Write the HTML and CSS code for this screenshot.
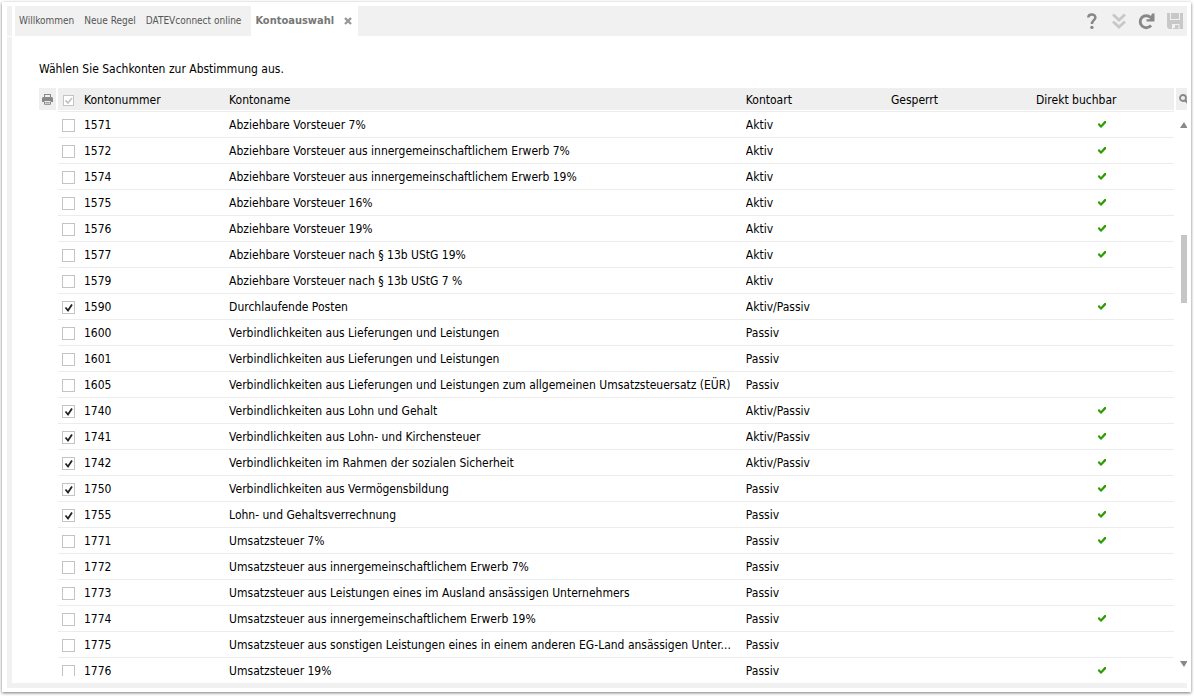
FILE: index.html
```html
<!DOCTYPE html>
<html lang="de">
<head>
<meta charset="utf-8">
<title>Kontoauswahl</title>
<link rel="stylesheet" href="styles.css">
</head>
<body>
<div class="window">
  <header class="topbar">
    <span class="strip"></span>
    <nav class="tabs">
      <a class="tab" href="#willkommen">Willkommen</a>
      <a class="tab" href="#regel">Neue Regel</a>
      <a class="tab" href="#datev">DATEVconnect online</a>
      <div class="tab-active"><a href="#konto">Kontoauswahl</a><button class="icon-btn" type="button" aria-label="Schließen"><svg width="8" height="8" viewBox="0 0 8 8"><path d="M1 1L7 7M7 1L1 7" stroke="#999" stroke-width="2.4"/></svg></button></div>
      <div class="tools">
        <button class="icon-btn" type="button" aria-label="Hilfe"><svg width="13" height="17" viewBox="0 0 13 17"><path d="M1.3 4.4C1.3 0.4 8.4 0.4 8.4 4.4C8.4 7.2 4.9 7.2 4.9 11" fill="none" stroke="#888" stroke-width="2.5"/><circle cx="4.9" cy="14.4" r="1.7" fill="#888"/></svg></button>
        <button class="icon-btn" type="button" aria-label="Alle ausklappen"><svg width="14" height="17" viewBox="0 0 14 17"><path d="M1 1.5L7 7L13 1.5M1 8.5L7 14L13 8.5" fill="none" stroke="#c8c8c8" stroke-width="2.8"/></svg></button>
        <button class="icon-btn" type="button" aria-label="Aktualisieren"><svg width="17" height="17" viewBox="0 0 17 17"><path d="M12.6 4.6A6 6 0 1 0 13 12.3" fill="none" stroke="#888" stroke-width="2.9"/><path d="M16.5 0.5V8.5H8.5V6.2H11.6L14 0.5Z" fill="#888"/></svg></button>
        <button class="icon-btn" type="button" aria-label="Speichern"><svg width="16" height="17" viewBox="0 0 16 17"><path d="M0 0H3V7H13V0H16V16H12.5V11H5V16H2L0 14Z" fill="#c8c8c8"/><path d="M4 0H12V6H4ZM8 12H11.5V16H6V15H8Z" fill="#c8c8c8"/></svg></button>
      </div>
    </nav>
  </header>
  <main class="panel">
    <p class="intro">Wählen Sie Sachkonten zur Abstimmung aus.</p>
    <div class="grid">
      <div class="side"><button class="icon-btn head-cell" type="button" aria-label="Drucken"><svg width="11" height="11" viewBox="0 0 11 11"><path d="M2 0H9V3H2Z" fill="#888"/><path d="M3 1H8V3H3Z" fill="#efefef"/><path d="M1 3H10L11 4V8H9V7H2V8H0V4Z" fill="#888"/><path d="M2.5 7.5V10.3H8.5V7.5" fill="none" stroke="#888"/><path d="M3.5 8.7H7.5" stroke="#888"/></svg></button></div>
      <div class="list">
        <table>
          <colgroup><col class="c-check"><col class="c-num"><col class="c-name"><col class="c-art"><col class="c-lock"><col class="c-book"></colgroup>
          <thead><tr><th><input class="all" type="checkbox" checked aria-label="Alle auswählen"></th><th>Kontonummer</th><th>Kontoname</th><th>Kontoart</th><th>Gesperrt</th><th>Direkt buchbar</th></tr></thead>
          <tbody>
            <tr class="gap"><td colspan="6"></td></tr>
            <tr><td><input type="checkbox" id="k1571"></td><td><label for="k1571">1571</label></td><td>Abziehbare Vorsteuer 7%</td><td>Aktiv</td><td></td><td class="yes"><svg><use href="#tick"/></svg></td></tr>
            <tr><td><input type="checkbox" id="k1572"></td><td><label for="k1572">1572</label></td><td>Abziehbare Vorsteuer aus innergemeinschaftlichem Erwerb 7%</td><td>Aktiv</td><td></td><td class="yes"><svg><use href="#tick"/></svg></td></tr>
            <tr><td><input type="checkbox" id="k1574"></td><td><label for="k1574">1574</label></td><td>Abziehbare Vorsteuer aus innergemeinschaftlichem Erwerb 19%</td><td>Aktiv</td><td></td><td class="yes"><svg><use href="#tick"/></svg></td></tr>
            <tr><td><input type="checkbox" id="k1575"></td><td><label for="k1575">1575</label></td><td>Abziehbare Vorsteuer 16%</td><td>Aktiv</td><td></td><td class="yes"><svg><use href="#tick"/></svg></td></tr>
            <tr><td><input type="checkbox" id="k1576"></td><td><label for="k1576">1576</label></td><td>Abziehbare Vorsteuer 19%</td><td>Aktiv</td><td></td><td class="yes"><svg><use href="#tick"/></svg></td></tr>
            <tr><td><input type="checkbox" id="k1577"></td><td><label for="k1577">1577</label></td><td>Abziehbare Vorsteuer nach § 13b UStG 19%</td><td>Aktiv</td><td></td><td class="yes"><svg><use href="#tick"/></svg></td></tr>
            <tr><td><input type="checkbox" id="k1579"></td><td><label for="k1579">1579</label></td><td>Abziehbare Vorsteuer nach § 13b UStG 7 %</td><td>Aktiv</td><td></td><td></td></tr>
            <tr><td><input type="checkbox" id="k1590" checked></td><td><label for="k1590">1590</label></td><td>Durchlaufende Posten</td><td>Aktiv/Passiv</td><td></td><td class="yes"><svg><use href="#tick"/></svg></td></tr>
            <tr><td><input type="checkbox" id="k1600"></td><td><label for="k1600">1600</label></td><td>Verbindlichkeiten aus Lieferungen und Leistungen</td><td>Passiv</td><td></td><td></td></tr>
            <tr><td><input type="checkbox" id="k1601"></td><td><label for="k1601">1601</label></td><td>Verbindlichkeiten aus Lieferungen und Leistungen</td><td>Passiv</td><td></td><td></td></tr>
            <tr><td><input type="checkbox" id="k1605"></td><td><label for="k1605">1605</label></td><td>Verbindlichkeiten aus Lieferungen und Leistungen zum allgemeinen Umsatzsteuersatz (EÜR)</td><td>Passiv</td><td></td><td></td></tr>
            <tr><td><input type="checkbox" id="k1740" checked></td><td><label for="k1740">1740</label></td><td>Verbindlichkeiten aus Lohn und Gehalt</td><td>Aktiv/Passiv</td><td></td><td class="yes"><svg><use href="#tick"/></svg></td></tr>
            <tr><td><input type="checkbox" id="k1741" checked></td><td><label for="k1741">1741</label></td><td>Verbindlichkeiten aus Lohn- und Kirchensteuer</td><td>Aktiv/Passiv</td><td></td><td class="yes"><svg><use href="#tick"/></svg></td></tr>
            <tr><td><input type="checkbox" id="k1742" checked></td><td><label for="k1742">1742</label></td><td>Verbindlichkeiten im Rahmen der sozialen Sicherheit</td><td>Aktiv/Passiv</td><td></td><td class="yes"><svg><use href="#tick"/></svg></td></tr>
            <tr><td><input type="checkbox" id="k1750" checked></td><td><label for="k1750">1750</label></td><td>Verbindlichkeiten aus Vermögensbildung</td><td>Passiv</td><td></td><td class="yes"><svg><use href="#tick"/></svg></td></tr>
            <tr><td><input type="checkbox" id="k1755" checked></td><td><label for="k1755">1755</label></td><td>Lohn- und Gehaltsverrechnung</td><td>Passiv</td><td></td><td class="yes"><svg><use href="#tick"/></svg></td></tr>
            <tr><td><input type="checkbox" id="k1771"></td><td><label for="k1771">1771</label></td><td>Umsatzsteuer 7%</td><td>Passiv</td><td></td><td class="yes"><svg><use href="#tick"/></svg></td></tr>
            <tr><td><input type="checkbox" id="k1772"></td><td><label for="k1772">1772</label></td><td>Umsatzsteuer aus innergemeinschaftlichem Erwerb 7%</td><td>Passiv</td><td></td><td></td></tr>
            <tr><td><input type="checkbox" id="k1773"></td><td><label for="k1773">1773</label></td><td>Umsatzsteuer aus Leistungen eines im Ausland ansässigen Unternehmers</td><td>Passiv</td><td></td><td></td></tr>
            <tr><td><input type="checkbox" id="k1774"></td><td><label for="k1774">1774</label></td><td>Umsatzsteuer aus innergemeinschaftlichem Erwerb 19%</td><td>Passiv</td><td></td><td class="yes"><svg><use href="#tick"/></svg></td></tr>
            <tr><td><input type="checkbox" id="k1775"></td><td><label for="k1775">1775</label></td><td>Umsatzsteuer aus sonstigen Leistungen eines in einem anderen EG-Land ansässigen Unter...</td><td>Passiv</td><td></td><td></td></tr>
            <tr><td><input type="checkbox" id="k1776"></td><td><label for="k1776">1776</label></td><td>Umsatzsteuer 19%</td><td>Passiv</td><td></td><td class="yes"><svg><use href="#tick"/></svg></td></tr>
          </tbody>
        </table>
      </div>
      <div class="side right">
        <button class="icon-btn head-cell" type="button" aria-label="Suchen"><svg width="8" height="10" viewBox="0 0 8 10"><circle cx="4" cy="4" r="3" fill="none" stroke="#888" stroke-width="1.8"/><path d="M6 6L9 9.5" stroke="#888" stroke-width="2"/></svg></button>
        <div class="scroll">
          <svg width="7" height="6" viewBox="0 0 7 6"><path d="M0 6L4 0L7 5V6Z" fill="#888"/></svg>
          <div class="track"><span class="space-a"></span><span class="thumb"></span><span class="space-b"></span></div>
          <svg width="7" height="6" viewBox="0 0 7 6"><path d="M0 0H7V1L4 6Z" fill="#888"/></svg>
        </div>
      </div>
    </div>
  </main>
</div>
<svg class="defs"><symbol id="tick" viewBox="0 0 8 7"><path d="M0 3L1 2L3 4L6.5 0H8V2L3 7L0 4Z" fill="#2c9c00"/></symbol></svg>
</body>
</html>
```
FILE: styles.css
```css
* { box-sizing: border-box; }
html, body { height: 100%; }
body {
  margin: 0;
  padding: 2px 3px 4px 2px;
  background: #fff;
  color: #000;
  font: 12px/16px "DejaVu Sans Condensed", "DejaVu Sans", sans-serif;
  overflow: hidden;
}
.window {
  height: 100%;
  display: flex;
  flex-direction: column;
  gap: 1px;
  padding: 4px 4px 4px 5px;
  background: #fff;
  box-shadow: 0 1px 3px 0 #777;
}
.topbar { display: flex; gap: 3px; height: 30px; }
.strip { width: 5px; background: #f1f1f1; }
.tabs {
  flex: 1;
  display: flex;
  align-items: center;
  gap: 10px;
  padding-left: 4px;
  background: #f1f1f1;
  font-size: 10px;
}
.tab { color: #555; text-decoration: none; }
.tab-active {
  display: flex;
  align-items: center;
  align-self: stretch;
  gap: 10px;
  padding: 0 6px 0 4px;
  background: #fff;
}
.tab-active a { color: #777; font-size: 11px; font-weight: bold; text-decoration: none; }
.icon-btn { display: flex; align-items: center; justify-content: center; padding: 0; border: 0; background: none; }
.tools { display: flex; align-items: center; gap: 12px; margin-left: auto; padding-right: 4px; }
.panel {
  flex: 1;
  min-height: 0;
  display: flex;
  flex-direction: column;
  border-left: 5px solid #f1f1f1;
  border-bottom: 5px solid #f1f1f1;
  padding: 24px 0 7px 27px;
}
.intro { margin: 0 0 11px; }
.grid { flex: 1; min-height: 0; display: grid; grid-template-columns: 17px 1fr 11px; gap: 2px; }
.side { display: flex; flex-direction: column; min-height: 0; }
.head-cell { width: 100%; height: 22px; background: #efefef; }
.list { min-height: 0; overflow: hidden; }
table { width: 100%; table-layout: fixed; border-collapse: separate; border-spacing: 0; }
.c-check { width: 26px; }
.c-num, .c-art, .c-lock { width: 13%; }
.c-book { width: 138px; }
th, td { padding: 0; text-align: left; font-weight: normal; white-space: nowrap; }
th { height: 22px; padding-top: 2px; background: #efefef; }
td { height: 26px; border-bottom: 1px solid #ececec; overflow: hidden; text-overflow: ellipsis; }
.gap td { height: 2px; }
input {
  appearance: none;
  display: block;
  width: 13px;
  height: 13px;
  margin: 1px 0 0 4px;
  border: 1px solid #c4c4c4;
  background: #fff no-repeat center;
}
input:checked { background-image: url("data:image/svg+xml,%3Csvg xmlns='http://www.w3.org/2000/svg' width='9' height='9'%3E%3Cpath d='M1.5 4.5L4 7.5L8 1.5' fill='none' stroke='%23222' stroke-width='1.8'/%3E%3C/svg%3E"); }
.all { width: 11px; height: 11px; margin: 0 0 0 5px; }
.all:checked { background-image: url("data:image/svg+xml,%3Csvg xmlns='http://www.w3.org/2000/svg' width='9' height='9'%3E%3Cpath d='M1.5 4.5L4 7L8 2' fill='none' stroke='%23c4c4c4' stroke-width='1.8'/%3E%3C/svg%3E"); }
.yes { padding-left: 62px; }
.yes svg { display: block; width: 8px; height: 7px; }
.right .head-cell { justify-content: flex-end; }
.scroll { flex: 1; display: flex; flex-direction: column; align-items: flex-end; padding: 12px 0 9px; }
.track { flex: 1; display: flex; flex-direction: column; }
.thumb { width: 6px; height: 68px; background: #c6c6c6; }
.space-a { flex: 107; }
.space-b { flex: 357; }
.defs { position: absolute; width: 0; height: 0; }
```
